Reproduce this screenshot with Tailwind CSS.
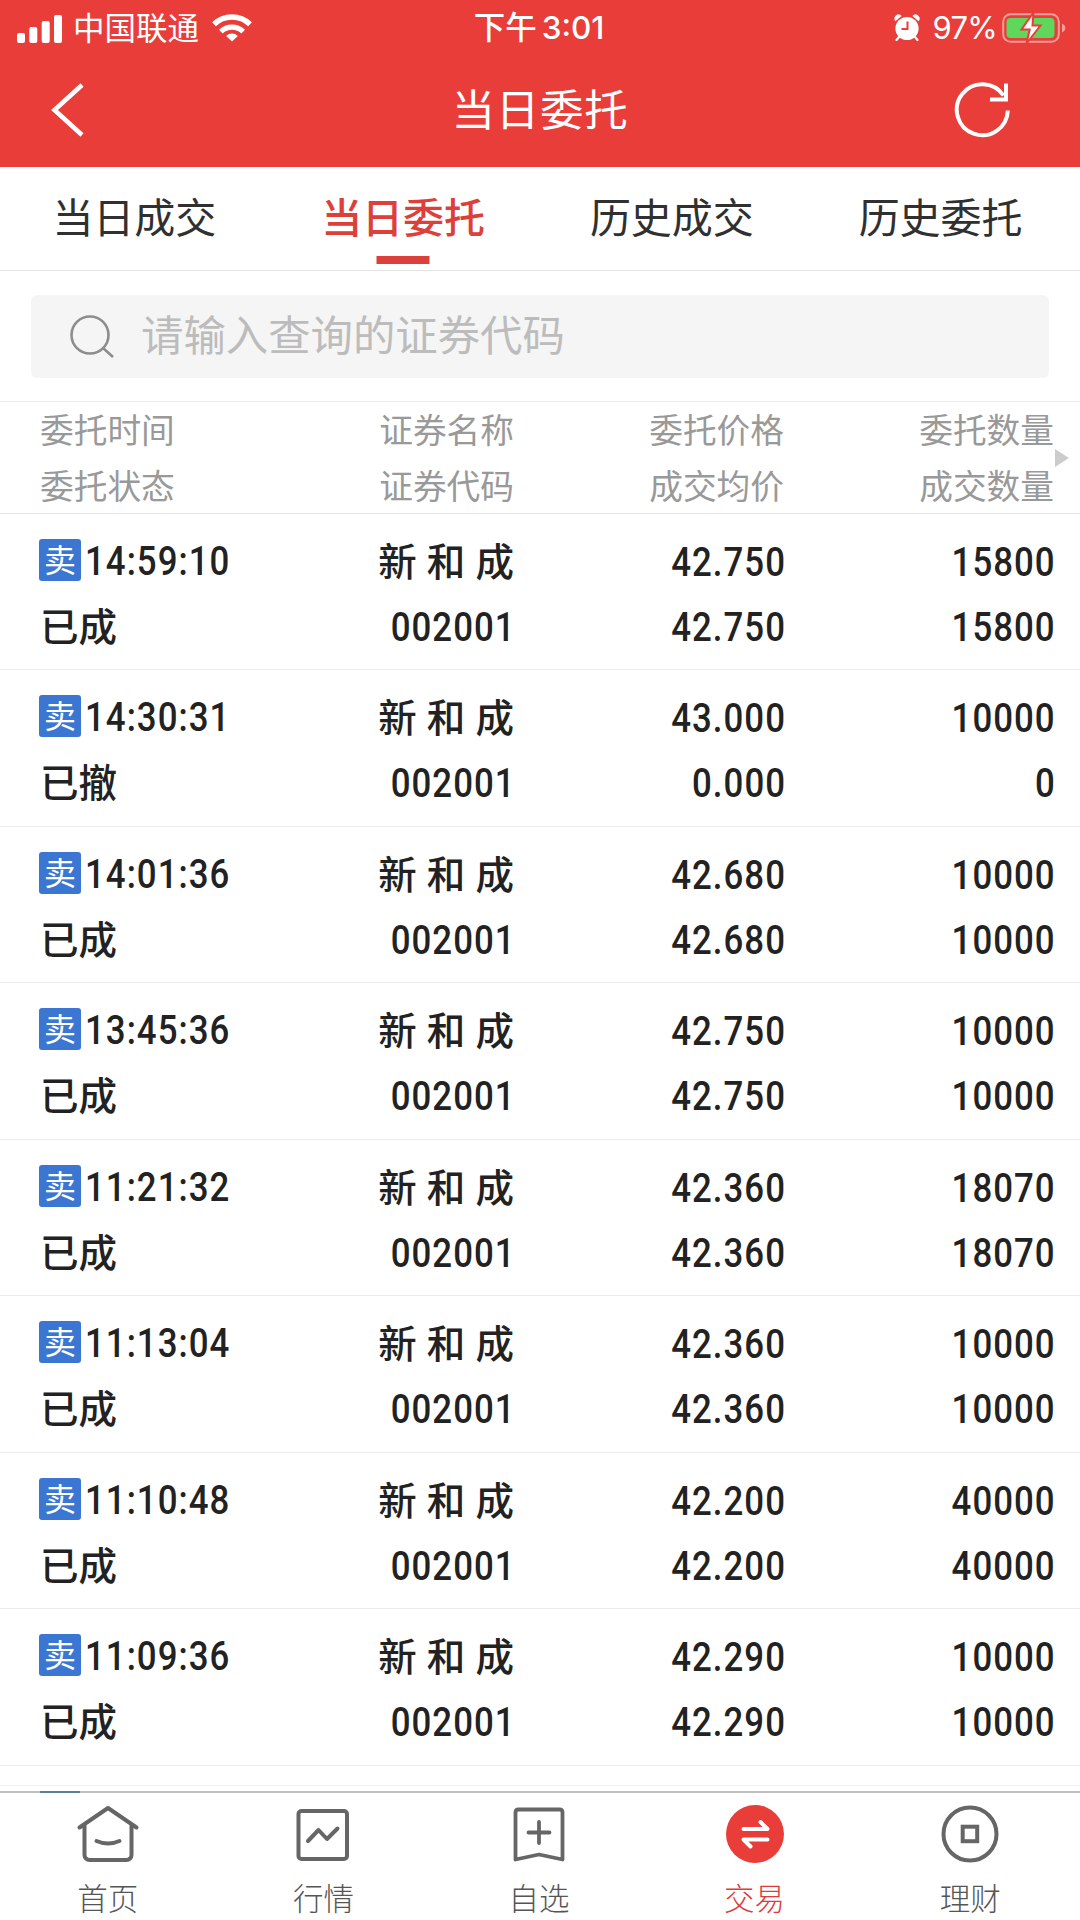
<!DOCTYPE html>
<html lang="zh-CN">
<head>
<meta charset="utf-8">
<title>当日委托</title>
<script src="https://cdn.jsdelivr.net/npm/@tailwindcss/browser@4"></script>
</head>
<body class="w-[1080px] h-[1920px] overflow-hidden bg-white font-['Noto_Sans_CJK_SC',sans-serif] text-[#222]">
<div class="flex h-[1920px] flex-col">
  <header class="h-[167px] shrink-0 bg-[#e83d38] text-white">
    <div class="grid h-[54px] grid-cols-3 items-center text-[31.5px] leading-none">
      <div class="flex items-center pl-[17px]">
        <svg class="mr-[11px] h-[28px] w-[45px]" viewBox="0 0 45 28" fill="#fff"><rect y="18" width="8" height="10" rx="2"/><rect x="12.3" y="12" width="8" height="16" rx="2"/><rect x="24.7" y="6" width="8" height="22" rx="2"/><rect x="37" width="8" height="28" rx="2"/></svg>
        <span class="pb-[5px] leading-[49px]">中国联通</span>
        <svg class="mb-[3px] ml-[13px] h-[29px] w-[40px]" viewBox="0 0 40 29" fill="none" stroke="#fff" stroke-width="5.4"><path d="M2 11.2a26 26 0 0 1 36 0"/><path d="M8.8 18.6a16.2 16.2 0 0 1 22.4 0"/><path d="M20 28.5l-5.8-5.6a8.4 8.4 0 0 1 11.6 0z" fill="#fff" stroke="none"/></svg>
      </div>
      <div class="pr-[2px] pb-[4px] text-center font-medium leading-[50px] whitespace-nowrap">下午<span class="ml-[5px] font-[Inter] text-[31.500px]">3:01</span></div>
      <div class="flex items-center justify-end pr-[13px] pb-[2px]">
        <svg class="mr-[12px] h-[27px] w-[26px]" viewBox="0 0 26 27"><g fill="#fff"><circle cx="13" cy="14.5" r="11.6"/><path d="M1.4 7.2A4 4 0 0 1 7.6 2zM24.600 7.200A4 4 0 0 0 18.400 2z"/></g><path d="M5 23l-2.500 3M21 23l2.500 3" stroke="#fff" stroke-width="2.200" stroke-linecap="round"/><path d="M13.500 7.500v7.500H7.500" fill="none" stroke="#e83d38" stroke-width="2"/></svg>
        <span class="mr-[5px] font-[Inter] text-[31px] leading-[52px] tracking-[-0.700px]">97%</span>
        <svg class="h-[34px] w-[65px]" viewBox="0 0 65 34"><rect x="1.200" y="3.200" width="55.600" height="27.600" rx="7.500" fill="none" stroke="#f59d9a" stroke-width="2"/><rect x="4.500" y="7" width="48" height="20" rx="4" fill="#5fd65c"/><path d="M60 12.500c4.500 2 4.500 7 0 9z" fill="#f59d9a"/><path d="M31.500 1.500L19.500 18.500h8.200L24.500 32.500 38.500 14.500H30.500z" fill="#fff" stroke="#e83d38" stroke-width="2"/></svg>
      </div>
    </div>
    <div class="grid h-[112px] grid-cols-3 items-center">
      <svg class="ml-[50px] h-[54px] w-[36px]" viewBox="0 0 36 54" fill="none" stroke="#fff" stroke-width="4.600"><path d="M32 2L4.500 27 32 52"/></svg>
      <h1 class="pb-[4px] text-center text-[43.500px] leading-[108px] tracking-[0.800px]">当日委托</h1>
      <svg class="mr-[68px] h-[58px] w-[58px] justify-self-end" viewBox="0 0 58 58" fill="none" stroke="#fff" stroke-width="4"><path d="M53.800 29.500A25.500 25.500 0 1 1 49.500 14.500"/><path d="M52 2.500V18.500H36"/></svg>
    </div>
  </header>

  <nav class="grid h-[104px] shrink-0 grid-cols-4 border-b border-[#e4e4e4] pr-[5px] text-center text-[41px] leading-[96px] text-[#303030]">
    <div>当日成交</div>
    <div class="relative font-medium text-[#dc403b]">当日委托<span class="absolute bottom-[6px] left-1/2 h-[8px] w-[53px] -translate-x-1/2 bg-[#dc403b]"></span></div>
    <div>历史成交</div>
    <div>历史委托</div>
  </nav>

  <div class="flex h-[131px] shrink-0 items-center border-b border-[#ebebeb] px-[31px]">
    <div class="flex h-[83px] w-full items-center rounded-[6px] bg-[#f5f5f5] pl-[38px]">
      <svg class="mr-[26px] h-[46px] w-[46px]" viewBox="0 0 46 46" fill="none" stroke="#8d8d8d" stroke-width="2.600"><circle cx="21" cy="22" r="18.500"/><path d="M34 35l10 9"/></svg>
      <span class="pb-[7px] text-[42.400px] leading-[76px] text-[#bcbcbc]">请输入查询的证券代码</span>
    </div>
  </div>

  <div class="relative grid h-[112px] shrink-0 grid-cols-[474px_270px_270px] border-b border-[#e6e6e6] pl-[40px] text-right text-[33.700px] leading-[56px] text-[#999]">
    <div class="-mt-[1px] flex justify-between"><div>委托时间<br>委托状态</div><div>证券名称<br>证券代码</div></div>
    <div class="-mt-[1px]">委托价格<br>成交均价</div>
    <div class="-mt-[1px]">委托数量<br>成交数量</div>
    <svg class="absolute right-[11px] top-[47px] h-[18px] w-[14px]" viewBox="0 0 14 18" fill="#ccc"><path d="M0 0l14 9-14 9z"/></svg>
  </div>

  <main id="rows" class="min-h-0 flex-1 overflow-hidden"></main>

  <footer class="relative grid h-[129px] shrink-0 grid-cols-5 border-t-2 border-[#c0c0c0] pr-[2px] pt-[10px] text-center text-[30.500px] font-light leading-[44px] text-[#555]">
    <span class="absolute -top-[2px] left-[40px] h-[2px] w-[40px] bg-[#5c7f99]"></span>
    <div class="flex flex-col items-center"><svg class="mb-[8px] h-[64px] w-[64px]" viewBox="0 0 64 64" fill="none" stroke="#666" stroke-width="4" stroke-linecap="round" stroke-linejoin="round"><path d="M3.500 24.500L32 5l28.500 19.500M8.500 22v30a5 5 0 0 0 5 5h37a5 5 0 0 0 5-5V22M20.500 38q11.500 5 23 0"/></svg>首页</div>
    <div class="flex flex-col items-center"><svg class="mb-[8px] h-[64px] w-[64px]" viewBox="0 0 64 64" fill="none" stroke="#666" stroke-width="4" stroke-linecap="round" stroke-linejoin="round"><rect x="7.500" y="8" width="48.500" height="48" rx="3"/><path d="M17 38l10.500-11 8.500 9L46.500 25.500"/></svg>行情</div>
    <div class="flex flex-col items-center"><svg class="mb-[8px] h-[64px] w-[64px]" viewBox="0 0 64 64" fill="none" stroke="#666" stroke-width="3.800" stroke-linecap="round" stroke-linejoin="round"><path d="M8.500 56.500V9.500q0-3 3-3h41q3 0 3 3v47L32 51.500z"/><path d="M21.500 29.500h21M32 19v21"/></svg>自选</div>
    <div class="flex flex-col items-center text-[#e03a3a]"><svg class="mb-[8px] h-[64px] w-[64px]" viewBox="0 0 64 64"><circle cx="32" cy="31" r="29" fill="#e83d38"/><path d="M20.500 26h24l-7-7M44.500 36.500h-24l7 7" fill="none" stroke="#fff" stroke-width="4" stroke-linecap="round" stroke-linejoin="round"/></svg>交易</div>
    <div class="flex flex-col items-center"><svg class="mb-[8px] h-[64px] w-[64px]" viewBox="0 0 64 64" fill="none" stroke="#666" stroke-width="4"><circle cx="32" cy="31" r="26.500"/><rect x="24.700" y="23.700" width="14.500" height="14.500"/></svg>理财</div>
  </footer>
</div>
<script>
const orders = [
  ['14:59:10','已成','42.750','42.750','15800','15800'],
  ['14:30:31','已撤','43.000','0.000','10000','0'],
  ['14:01:36','已成','42.680','42.680','10000','10000'],
  ['13:45:36','已成','42.750','42.750','10000','10000'],
  ['11:21:32','已成','42.360','42.360','18070','18070'],
  ['11:13:04','已成','42.360','42.360','10000','10000'],
  ['11:10:48','已成','42.200','42.200','40000','40000'],
  ['11:09:36','已成','42.290','42.290','10000','10000']
];
const num = (t, origin = 'origin-right') => `<span class="-mr-[2px] inline-block font-[Roboto] text-[40px] font-medium tracking-[1.200px] scale-x-[0.87] ${origin}">${t}</span>`;
const badge = '<span class="flex h-[42px] w-[42px] justify-center rounded-[3px] bg-[#3a76d2] text-[32px] leading-[38px] font-normal text-white">卖</span>';
document.getElementById('rows').innerHTML = orders.map(([time, state, price, avg, qty, done]) => `
  <section class="grid h-[156.450px] grid-cols-[300px_175px_270px_270px] grid-rows-[65px_65px] border-b border-[#ebebeb] pl-[39px] pt-[13px] text-right text-[38.500px] font-medium leading-[65px]">
    <div class="flex items-center pt-[1px]">${badge}<span class="ml-[4px]">${num(time, 'origin-left')}</span></div>
    <div class="whitespace-pre [word-spacing:1.500px]">新 和 成</div><div>${num(price)}</div><div>${num(qty)}</div>
    <div class="pl-[1px] text-left">${state}</div><div>${num('002001')}</div><div>${num(avg)}</div><div>${num(done)}</div>
  </section>`).join('') + `<div class="h-[20px] border-b border-[#f0f0f0]"></div>`;
</script>
</body>
</html>
